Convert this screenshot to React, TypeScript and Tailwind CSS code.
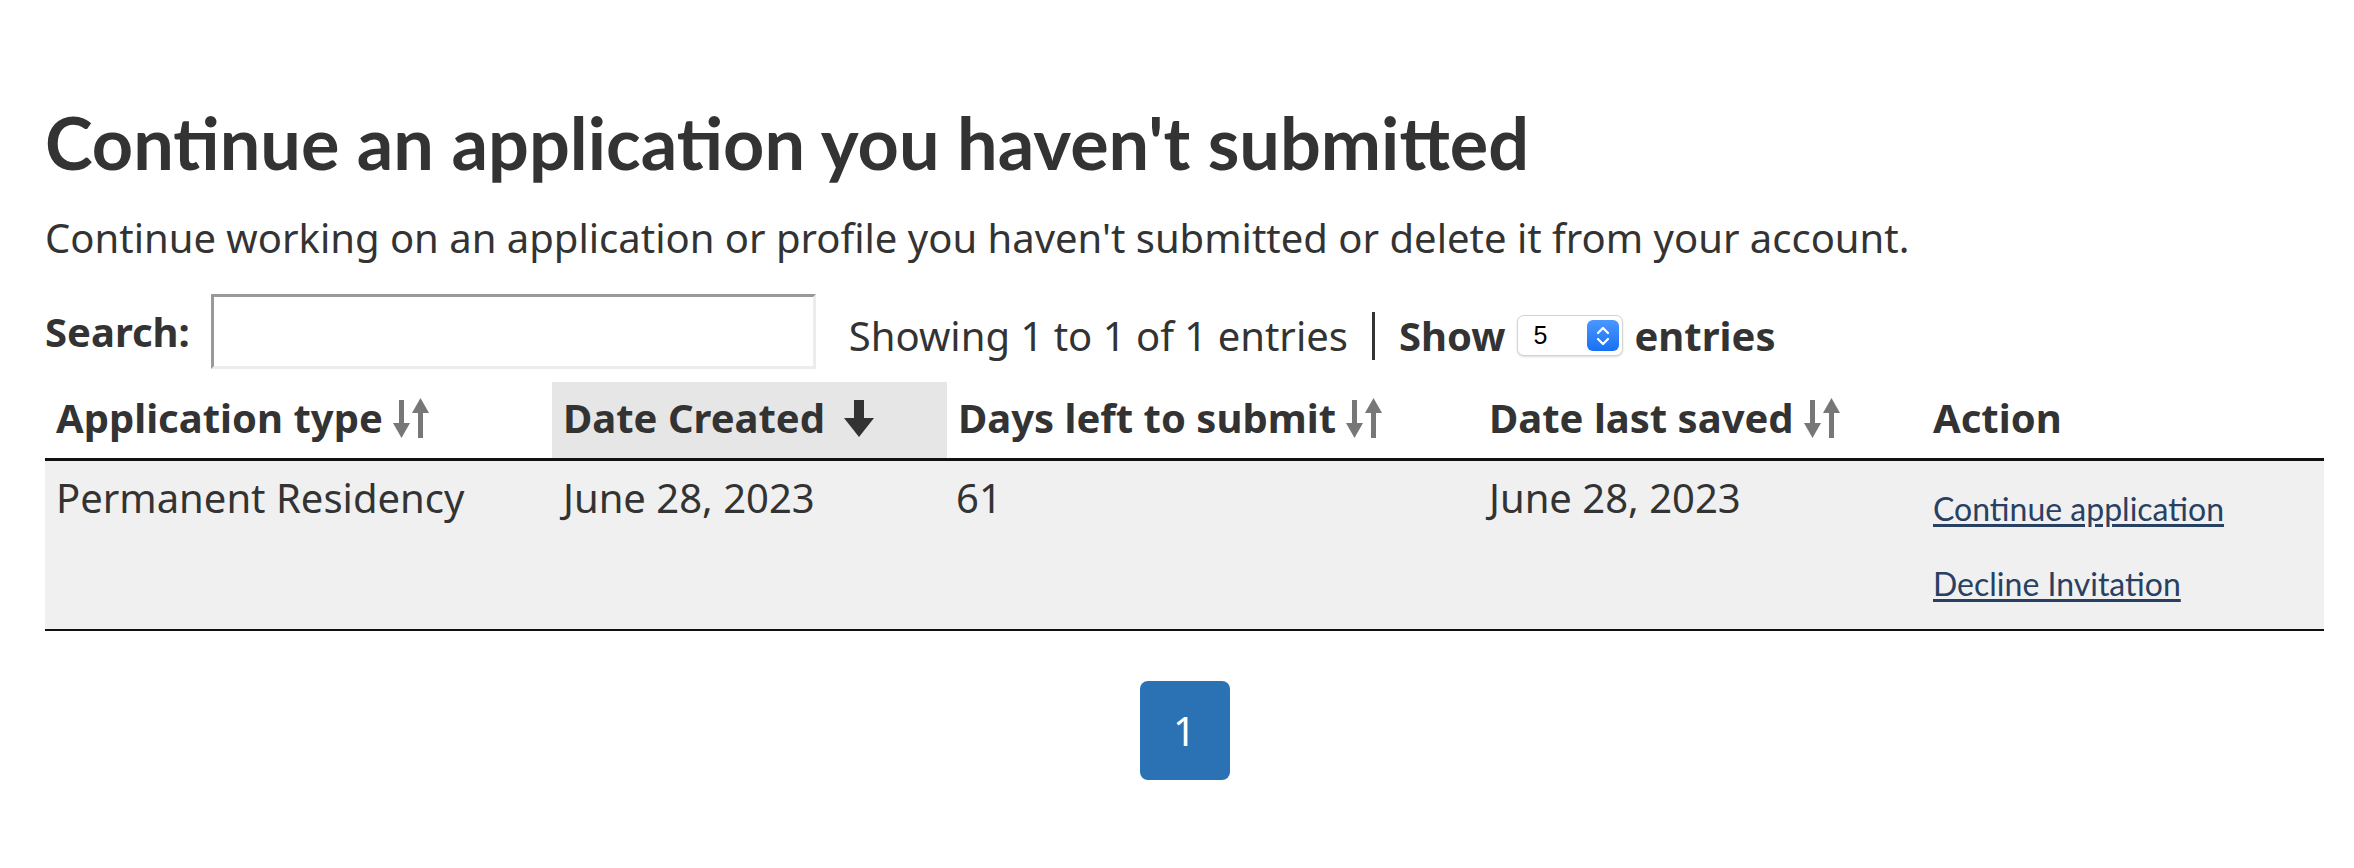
import React from "react";

const SortIcon = () => (
  <svg width="37" height="40" viewBox="0 0 37 40" className="shrink-0">
    {/* down arrow on the left */}
    <rect x="6" y="2" width="5" height="26" fill="#777" />
    <polygon points="0,25 17,25 8.5,40" fill="#777" />
    {/* up arrow on the right */}
    <rect x="25" y="12" width="5" height="28" fill="#777" />
    <polygon points="19,15 36,15 27.5,0" fill="#777" />
  </svg>
);

const SortDownIcon = () => (
  <svg width="32" height="37" viewBox="0 0 32 37" className="shrink-0">
    <rect x="11" y="0" width="10" height="21" fill="#333" />
    <polygon points="1,18 31,18 16,37" fill="#333" />
  </svg>
);

const FakeSelect = () => (
  <div className="flex h-[41px] w-[106px] items-center justify-between rounded-[7px] border border-[#d4d4d4] bg-white pl-[15px] pr-[3px] shadow-[0_1px_2px_rgba(0,0,0,0.15)]">
    <span className="font-['Liberation_Sans',sans-serif] text-[25px] leading-none text-black">5</span>
    <div className="flex h-[31px] w-[32px] items-center justify-center rounded-[6px] bg-gradient-to-b from-[#4a97ff] to-[#1670f5]">
      <svg width="14" height="22" viewBox="0 0 14 22" fill="none" stroke="white" strokeWidth="2.2" strokeLinecap="round" strokeLinejoin="round">
        <polyline points="2,8 7,3 12,8" />
        <polyline points="2,14 7,19 12,14" />
      </svg>
    </div>
  </div>
);

const headers = [
  { label: "Application type", sort: "both", w: "w-[507px]" },
  { label: "Date Created", sort: "down", w: "w-[395px]" },
  { label: "Days left to submit", sort: "both", w: "w-[531px]" },
  { label: "Date last saved", sort: "both", w: "w-[444px]" },
  { label: "Action", sort: "none", w: "w-[402px]" },
];

export default function App() {
  return (
    <div className="min-h-screen bg-white font-['Noto_Sans',sans-serif] text-[#333]">
      <div className="pl-[45px] pr-[30px] pt-[102px]">
        <h2 className="font-['Lato',sans-serif] text-[72px] font-bold leading-[80px]">
          Continue an application you haven't submitted
        </h2>
        <p className="mt-[28px] text-[40px] leading-[56px]">
          Continue working on an application or profile you haven't submitted or delete it from your account.
        </p>

        {/* search + info row */}
        <div className="mt-[28px] flex items-center">
          <label className="text-[40px] font-bold leading-[56px]">Search:</label>
          <input
            type="text"
            className="ml-[21px] h-[75px] w-[605px] border-[3px] border-b-[#ececec] border-l-[#999] border-r-[#ececec] border-t-[#999] bg-white outline-none"
          />
          <div className="ml-[33px] mt-[8px] flex items-center text-[40px] leading-[56px]">
            <span>Showing 1 to 1 of 1 entries</span>
            <span className="ml-[24px] h-[48px] w-[3px] bg-[#333]" />
            <span className="ml-[24px] font-bold">Show</span>
            <div className="ml-[12px]">
              <FakeSelect />
            </div>
            <span className="ml-[11px] font-bold">entries</span>
          </div>
        </div>

        {/* table */}
        <table className="mt-[13px] w-[2279px] table-fixed border-collapse">
          <thead>
            <tr className="border-b-[3px] border-[#111]">
              {headers.map((h) => (
                <th
                  key={h.label}
                  className={`${h.w} pb-[12px] pl-[11px] pt-[8px] text-left text-[40px] font-bold leading-[56px] ${
                    h.sort === "down" ? "bg-[#e6e6e6]" : ""
                  }`}
                >
                  <div className="flex items-center">
                    <span>{h.label}</span>
                    {h.sort === "both" && (
                      <span className="ml-[10px] flex">
                        <SortIcon />
                      </span>
                    )}
                    {h.sort === "down" && (
                      <span className="ml-[18px] flex">
                        <SortDownIcon />
                      </span>
                    )}
                  </div>
                </th>
              ))}
            </tr>
          </thead>
          <tbody>
            <tr className="border-b-2 border-[#111] bg-[#f0f0f0] align-top text-[40px] leading-[56px]">
              <td className="pl-[11px] pt-[9px]">Permanent Residency</td>
              <td className="pl-[11px] pt-[9px]">June 28, 2023</td>
              <td className="pl-[9px] pt-[9px]">61</td>
              <td className="pl-[11px] pt-[9px]">June 28, 2023</td>
              <td className="pb-[25px] pl-[11px] pt-[27px]">
                <div className="flex flex-col items-start gap-[34px] font-['Lato',sans-serif] text-[32px] leading-[41px]">
                  <a href="#" className="text-[#284162] underline underline-offset-[3px]">
                    Continue application
                  </a>
                  <a href="#" className="text-[#284162] underline underline-offset-[3px]">
                    Decline Invitation
                  </a>
                </div>
              </td>
            </tr>
          </tbody>
        </table>

        {/* pagination */}
        <div className="mt-[50px] flex w-[2279px] justify-center">
          <button className="flex h-[99px] w-[90px] items-center justify-center rounded-[8px] bg-[#2b72b4] text-[40px] leading-none text-white">
            1
          </button>
        </div>
      </div>
    </div>
  );
}
